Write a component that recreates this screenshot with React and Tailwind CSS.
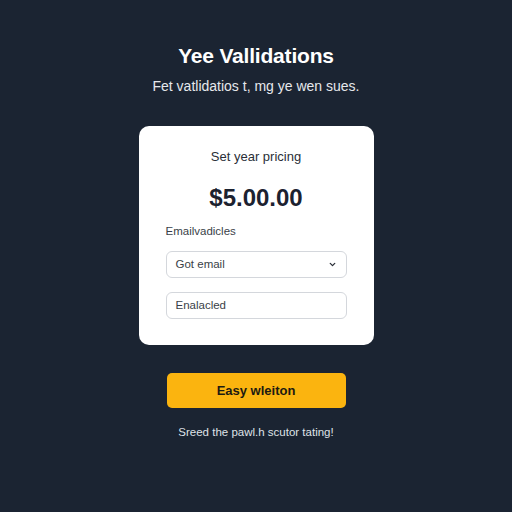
export default function App() {
  return (
    <div className="min-h-[512px] w-full bg-[#1b2432] flex flex-col items-center pt-[43px] font-['Liberation_Sans',Arial,sans-serif]">
      <h1 className="text-[21px] leading-[26px] font-bold text-white tracking-[-0.2px]">Yee Vallidations</h1>
      <p className="mt-[8px] text-[14px] leading-[18px] text-[#e6e8ec]">Fet vatlidatios t, mg ye wen sues.</p>

      <div className="mt-[31px] w-[235px] h-[219px] bg-white rounded-[10px] flex flex-col items-center pt-[23px] px-[27px]">
        <div className="text-[13px] leading-[16px] text-[#2a2f38]">Set year pricing</div>
        <div className="mt-[18px] text-[24px] leading-[30px] font-bold text-[#1c2230]">$5.00.00</div>
        <div className="mt-[11px] self-stretch text-[11.5px] leading-[14px] text-[#3a3f48]">Emailvadicles</div>
        <div className="mt-[13px] self-stretch h-[27px] border border-[#d4d7dc] rounded-[6px] flex items-center justify-between px-[9px]">
          <span className="text-[11.5px] text-[#3a3f48]">Got email</span>
          <svg width="9" height="9" viewBox="0 0 24 24" fill="none" stroke="#2a2f38" strokeWidth="3.5" strokeLinecap="round" strokeLinejoin="round">
            <path d="M6 9l6 6 6-6" />
          </svg>
        </div>
        <div className="mt-[14px] self-stretch h-[27px] border border-[#d4d7dc] rounded-[6px] flex items-center px-[9px]">
          <span className="text-[11.5px] text-[#3a3f48]">Enalacled</span>
        </div>
      </div>

      <button className="mt-[28px] w-[179px] h-[35px] bg-[#fbb40f] rounded-[5px] text-[13px] font-bold text-[#1d1a12]">
        Easy wleiton
      </button>
      <p className="mt-[16px] text-[11.5px] text-[#dfe2e7]">Sreed the pawl.h scutor tating!</p>
    </div>
  );
}
